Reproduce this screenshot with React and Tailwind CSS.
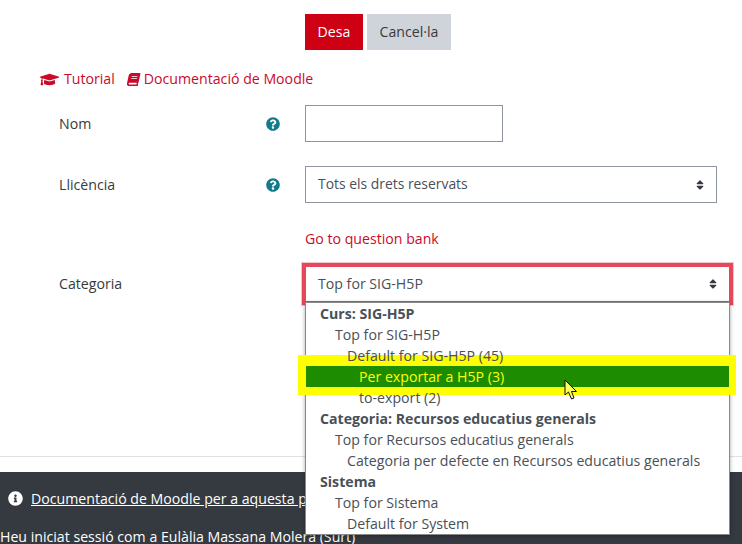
import React from "react";
import { FaBook, FaGraduationCap, FaInfoCircle, FaQuestionCircle, FaSort } from "react-icons/fa";

const options = [
  { label: "Curs: SIG-H5P", group: true },
  { label: "Top for SIG-H5P", indent: "pl-[29px]" },
  { label: "Default for SIG-H5P (45)", indent: "pl-[41px]" },
  { label: "Per exportar a H5P (3)", indent: "pl-[53px]", active: true },
  { label: "to-export (2)", indent: "pl-[53px]" },
  { label: "Categoria: Recursos educatius generals", group: true },
  { label: "Top for Recursos educatius generals", indent: "pl-[29px]" },
  { label: "Categoria per defecte en Recursos educatius generals", indent: "pl-[41px]" },
  { label: "Sistema", group: true },
  { label: "Top for Sistema", indent: "pl-[29px]" },
  { label: "Default for System", indent: "pl-[41px]" },
];

const FormRow = ({ label, help, children, className }) => (
  <div className={`flex items-center pl-[59px] ${className}`}>
    <div className="w-[207px] text-[#373a3c]">{label}</div>
    <div className="w-[39px] flex">{help && <FaQuestionCircle className="text-[14px] text-[#117a8b]" />}</div>
    {children}
  </div>
);

const App = () => {
  return (
    <div
      className="relative w-[742px] h-[544px] overflow-hidden bg-white text-[14.15px]"
      style={{ fontFamily: '"Open Sans", "Noto Sans", sans-serif' }}
    >
      <div className="flex gap-1 pl-[305px] pt-[14px]">
        <button className="w-[58px] h-[36px] bg-[#ce0014] text-white">Desa</button>
        <button className="w-[84px] h-[36px] bg-[#ced4da] text-[#373a3c]">Cancel·la</button>
      </div>

      <div className="flex items-center gap-[12px] pl-[40px] mt-[19px] h-[20px] text-[#ca0a2c]">
        <span className="flex items-center gap-[5px]">
          <FaGraduationCap className="text-[19px]" /> Tutorial
        </span>
        <span className="flex items-center gap-[4px]">
          <FaBook className="text-[13px] -skew-x-12" /> Documentació de Moodle
        </span>
      </div>

      <FormRow label="Nom" help className="mt-[16px]">
        <input className="w-[198px] h-[37px] border border-[#8f959e] bg-white" />
      </FormRow>

      <FormRow label="Llicència" help className="mt-[24px]">
        <div className="w-[412px] h-[37px] border border-[#8f959e] flex items-center justify-between pl-[12px] pr-[10px] text-[13.9px] text-[#495057]">
          Tots els drets reservats
          <FaSort className="text-[12px] text-[#343a40]" />
        </div>
      </FormRow>

      <div className="pl-[305px] mt-[26px] h-[20px] leading-[20px] text-[#ca0a2c]">Go to question bank</div>

      <FormRow label="Categoria" className="mt-[16px]">
        <div className="w-[425px] h-[37px] flex items-center justify-between pl-[13px] pr-[11px] text-[#495057]">
          Top for SIG-H5P
          <FaSort className="text-[12px] text-[#343a40]" />
        </div>
      </FormRow>

      <hr className="mt-[154px] border-[#dee2e6]" />

      <div className="mt-[15px] h-[73px] bg-[#343a40] text-white">
        <div className="flex items-center gap-[8px] pl-[8px] pt-[8px] h-[45px]">
          <FaInfoCircle className="text-[15px]" />
          <span className="underline whitespace-nowrap">Documentació de Moodle per a aquesta pàgina</span>
        </div>
        <div className="whitespace-nowrap leading-[20px] mt-[10px]">Heu iniciat sessió com a Eulàlia Massana Molera (Surt)</div>
      </div>

      {/* red outline drawn over the select in the screenshot */}
      <div className="absolute left-[302px] top-[263px] w-[431px] h-[42px] border-[4px] border-[#e4485a] outline outline-1 outline-[#f3c3c9]" />

      <div className="absolute left-[305px] top-[302px] w-[425px] h-[233px] bg-white border border-[#8a8a8a] shadow-[0_1px_4px_rgba(0,0,0,0.35)] text-[#495057]">
        {/* yellow marker */}
        <div className="absolute -left-[8px] top-[52px] w-[438px] h-[40px] bg-[#ffff00]" />
        <div className="absolute left-0 top-[63px] w-full h-[21px] bg-[#1e8c00]" />
        <div className="relative">
          {options.map((option) => (
            <div
              key={option.label}
              className={`h-[21px] leading-[21px] whitespace-nowrap ${option.group ? "pl-[14px] font-bold" : option.indent} ${option.active ? "text-[#ffff00]" : ""}`}
            >
              {option.label}
            </div>
          ))}
        </div>
      </div>

      {/* mouse pointer */}
      <svg className="absolute left-[564px] top-[379px]" width="15" height="22" viewBox="0 0 15 22">
        <path d="M1 1 L1 16 L4.5 13 L7.5 20 L10 19 L7.5 12.5 L12.5 12.5 Z" fill="#ffff66" stroke="#111" strokeWidth="1" />
      </svg>
    </div>
  );
};

export default App;
